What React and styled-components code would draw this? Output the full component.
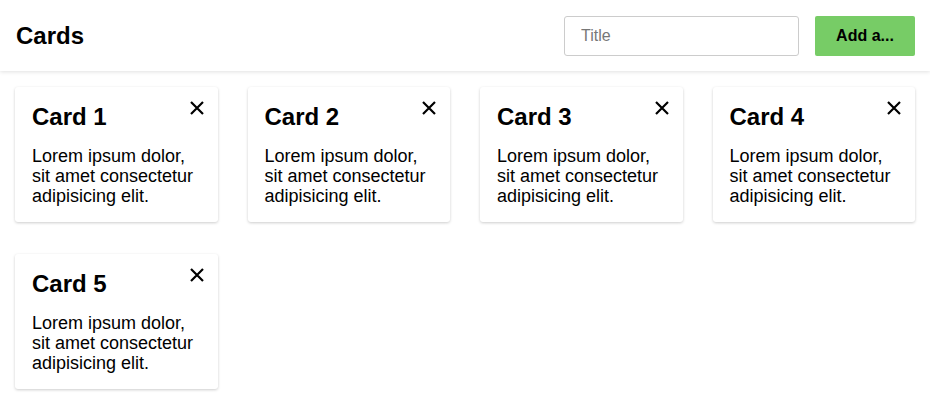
import React from "react";
import styled, { createGlobalStyle } from "styled-components";

const Global = createGlobalStyle`
  html, body { margin: 0; padding: 0; background: #fff; }
  body { font-family: "Liberation Sans", Arial, sans-serif; color: #000; }
  * { box-sizing: border-box; }
`;

const Header = styled.header`
  display: flex;
  align-items: center;
  height: 71px;
  padding: 0 15px 0 16px;
  box-shadow: 0 1px 4px rgba(0, 0, 0, 0.12);
  position: relative;
`;

const Title = styled.h1`
  margin: 0;
  font-size: 24px;
  font-weight: 700;
  flex: 1;
`;

const Form = styled.form`
  display: flex;
  gap: 16px;
  align-items: center;
`;

const Input = styled.input`
  width: 235px;
  height: 40px;
  border: 1px solid #ccc;
  border-radius: 3px;
  padding: 0 16px;
  font-size: 16px;
  font-family: "Liberation Sans", Arial, sans-serif;
  color: #000;
  &::placeholder { color: #777; }
  outline: none;
`;

const Button = styled.button`
  width: 100px;
  height: 40px;
  border: none;
  border-radius: 2px;
  background: #77cc66;
  font-size: 16px;
  font-weight: 700;
  font-family: "Liberation Sans", Arial, sans-serif;
  color: #000;
  padding: 0;
  text-align: center;
  white-space: nowrap;
`;

const Grid = styled.main`
  display: grid;
  grid-template-columns: repeat(4, 1fr);
  column-gap: 30px;
  row-gap: 32px;
  padding: 16px 15px;
`;

const Card = styled.div`
  position: relative;
  background: #fff;
  border-radius: 3px;
  box-shadow: 0 1px 3px rgba(0, 0, 0, 0.2);
  padding: 14px 16px 16px 17px;
`;

const CardTitle = styled.h2`
  margin: 0 0 13px;
  font-size: 24px;
  font-weight: 700;
  line-height: 32px;
`;

const CardText = styled.p`
  margin: 0;
  font-size: 18px;
  line-height: 20px;
`;

const Close = styled.button`
  position: absolute;
  top: 13px;
  right: 13px;
  width: 16px;
  height: 16px;
  padding: 0;
  border: none;
  background: none;
  display: flex;
`;

const CloseIcon = () => (
  <svg width="16" height="16" viewBox="0 0 16 16">
    <path d="M2 2 L14 14 M14 2 L2 14" stroke="#000" strokeWidth="2.2" />
  </svg>
);

const cards = [1, 2, 3, 4, 5];

export default function App() {
  return (
    <>
      <Global />
      <Header>
        <Title>Cards</Title>
        <Form onSubmit={(e) => e.preventDefault()}>
          <Input placeholder="Title" />
          <Button type="submit">Add a...</Button>
        </Form>
      </Header>
      <Grid>
        {cards.map((n) => (
          <Card key={n}>
            <CardTitle>Card {n}</CardTitle>
            <CardText>Lorem ipsum dolor, sit amet consectetur adipisicing elit.</CardText>
            <Close aria-label="Remove">
              <CloseIcon />
            </Close>
          </Card>
        ))}
      </Grid>
    </>
  );
}
